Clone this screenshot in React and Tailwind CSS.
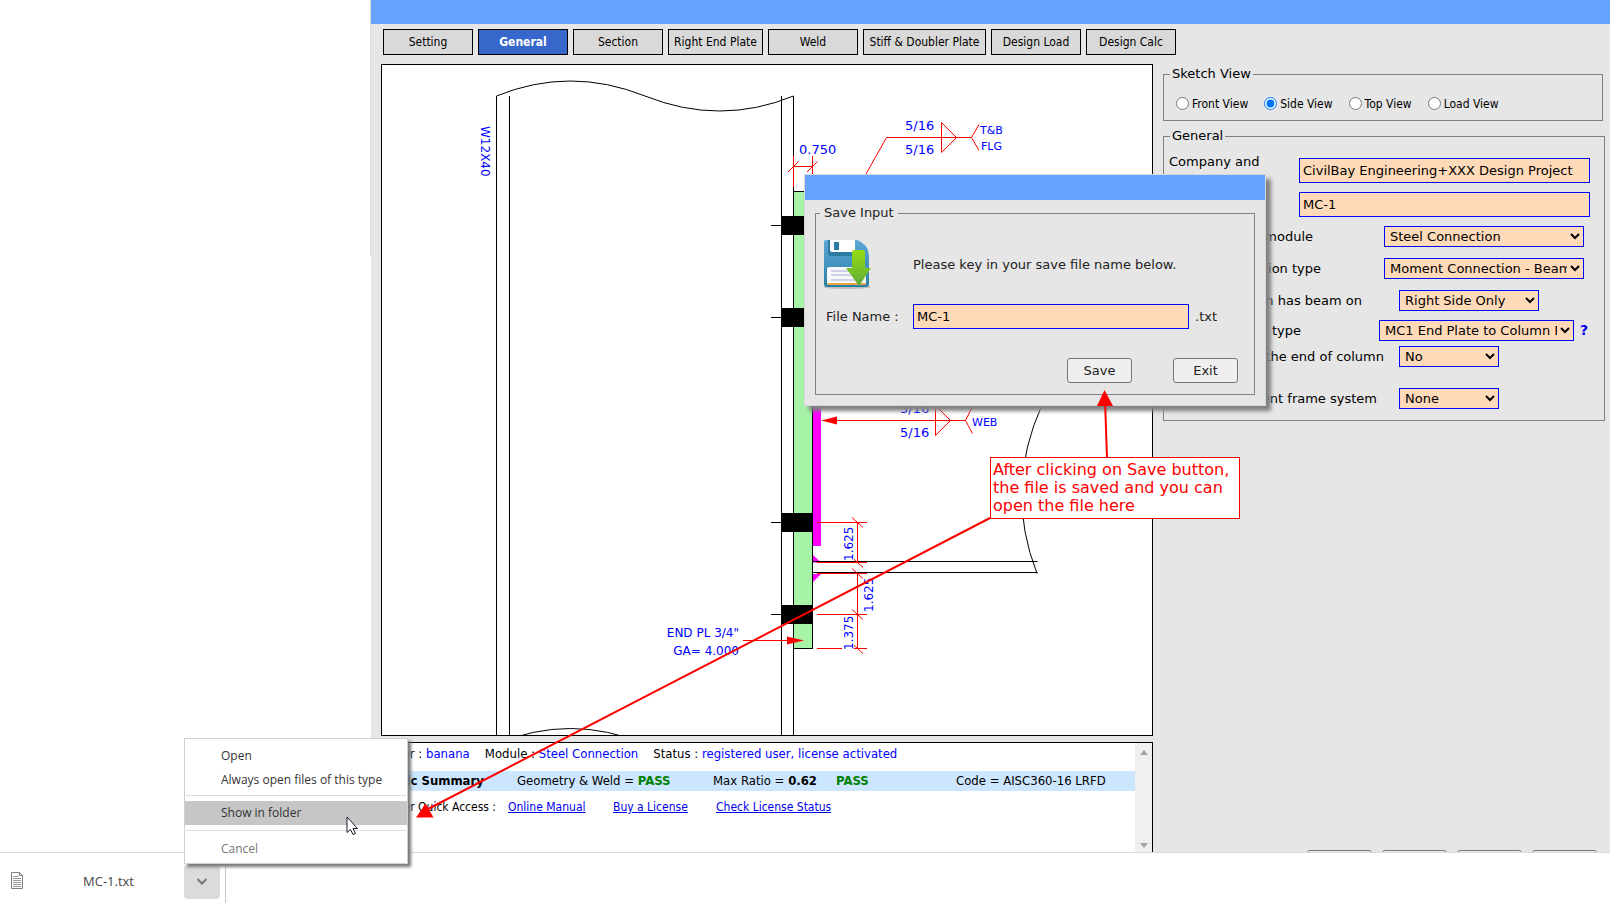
import React from 'react'

const tabs = [
  { name: 'Setting', width: 'w-[90px]' },
  { name: 'General', width: 'w-[90px]', active: true },
  { name: 'Section', width: 'w-[90px]' },
  { name: 'Right End Plate', width: 'w-[95px]' },
  { name: 'Weld', width: 'w-[90px]' },
  { name: 'Stiff & Doubler Plate', width: 'w-[123px]' },
  { name: 'Design Load', width: 'w-[90px]' },
  { name: 'Design Calc', width: 'w-[90px]' },
]

const views = ['Front View', 'Side View', 'Top View', 'Load View']

const tahoma = "font-['DejaVu_Sans_Condensed','DejaVu_Sans',sans-serif]"
const verdana = "font-['DejaVu_Sans',sans-serif]"
const segoe = "font-['Open_Sans',sans-serif]"

const field =
  'border border-[#0000ff] bg-[#ffdab9] text-[13px] text-black outline-none'

const Tabs = () => (
  <nav className="flex gap-[5px] pl-3 pt-[5px]">
    {tabs.map(t => (
      <button
        key={t.name}
        className={`h-[26px] border border-black text-center text-[12px] whitespace-nowrap ${tahoma} ${t.width} ${
          t.active ? 'bg-[#3867cb] font-bold text-white' : 'bg-[#d9d9d9]'
        }`}
      >
        {t.name}
      </button>
    ))}
  </nav>
)

const Bolt = ({ y }) => (
  <g>
    <path d={`M771 ${y}H782`} stroke="#000" />
    <rect x="781" y={y - 9.5} width="32" height="19" fill="#000" />
  </g>
)

const Tick = ({ y }) => <path d={`M817 ${y}H867M852 ${y - 5}L863 ${y + 5}`} />

const Sketch = () => (
  <svg viewBox="382 65 770 670" className="block w-full" fill="none">
    {/* column */}
    <g stroke="#000">
      <path d="M496.5 96V736M509.5 96V736M781.5 96V736M793.5 96V736" />
      <path d="M496.5 96Q570 66 645 96T793.5 96" />
      <path d="M496.5 744Q570 713 645 744" />
    </g>
    {/* end plate */}
    <rect x="793.5" y="191.5" width="19" height="457" fill="#a6f2a6" stroke="#000" />
    <rect x="813" y="300" width="8" height="246" fill="#f0f" />
    <path d="M813 555L821 562.5H813ZM813 574H821L813 582Z" fill="#f0f" />
    {[225.5, 317.5, 522.5, 614.5].map(y => (
      <Bolt key={y} y={y} />
    ))}
    {/* beam */}
    <path
      d="M813 561.5H1037.5M813 572.5H1037.5M1042 405Q1004 489 1037 573.5"
      stroke="#000"
    />
    {/* dimensions */}
    <g stroke="#f00">
      <path d="M793.5 156V187M812.5 156V187M793 166.5H813M788 172L798.5 161.5M807 172L817.5 161.5" />
      <path d="M866 174L886.5 137.5H971.5M979 124.5L971.5 137.5L979 150.5M941.5 122.5V152.5L956.5 137.5Z" />
      <path d="M832 420.5H965.5M972 407.5L965.5 420.5L972.5 433.5M935.5 405.5V435.5L950.5 420.5Z" />
      {[522.5, 562.5, 573.5, 614.5, 648.5].map(y => (
        <Tick key={y} y={y} />
      ))}
      <path d="M857.5 522V562M857.5 573V649M743 640.5H790" />
    </g>
    <path d="M821 420.5L837 416.5V424.5ZM804 640.5L787 636.5V644.5Z" fill="#f00" />
    <path d="M842 524H854V560H842ZM842 615H854V650H842Z" fill="#fff" />
    <g fill="#0000ff" className={`text-[13px] ${verdana}`}>
      <text x="799" y="154">0.750</text>
      <text x="905" y="130">5/16</text>
      <text x="905" y="154">5/16</text>
      <text x="900" y="413">5/16</text>
      <text x="900" y="437">5/16</text>
    </g>
    <g fill="#0000ff" className={`text-[12px] ${verdana}`}>
      <text transform="translate(853 561) rotate(-90)">1.625</text>
      <text transform="translate(873 612) rotate(-90)">1.625</text>
      <text transform="translate(853 650) rotate(-90)">1.375</text>
      <text transform="translate(481 126) rotate(90)">W12X40</text>
      <text x="739" y="637" textAnchor="end">END PL 3/4"</text>
      <text x="739" y="655" textAnchor="end">GA= 4.000</text>
    </g>
    <g fill="#0000ff" className={`text-[11px] ${verdana}`}>
      <text x="980" y="134">T&amp;B</text>
      <text x="981" y="150">FLG</text>
      <text x="972" y="426">WEB</text>
    </g>
  </svg>
)

const link = 'text-[12px] text-[#0000ee] underline'

const Info = () => (
  <section className={`mt-1.5 flex h-40 border border-black bg-white ${tahoma}`}>
    <div className="min-w-0 flex-1 text-[12px] whitespace-nowrap">
      <p className="flex h-[22px] items-center gap-[15px] pl-1.5 text-[13px]">
        <span>
          User : <span className="text-[#0000ff]">banana</span>
        </span>
        <span>
          Module : <span className="text-[#0000ff]">Steel Connection</span>
        </span>
        <span>
          Status :{' '}
          <span className="text-[#0000ff]">registered user, license activated</span>
        </span>
      </p>
      <p className="mt-1.5 grid h-5 grid-cols-[135px_196px_123px_120px_1fr] items-center bg-[#cce6ff] text-[13px]">
        <b className="pl-2">Calc Summary</b>
        <span>
          Geometry &amp; Weld = <b className="text-[#008000]">PASS</b>
        </span>
        <span>
          Max Ratio = <b>0.62</b>
        </span>
        <b className="text-[#008000]">PASS</b>
        <span>Code = AISC360-16 LRFD</span>
      </p>
      <p className="mt-[7px] grid h-4 grid-cols-[126px_105px_103px_1fr] items-center">
        <span className="pl-2">User Quick Access :</span>
        <a href="#manual" className={link}>Online Manual</a>
        <a href="#buy" className={link}>Buy a License</a>
        <a href="#status" className={link}>Check License Status</a>
      </p>
    </div>
    <div className="flex h-[112px] w-[17px] flex-col items-center justify-between bg-[#f0f0f0] py-[7px]">
      <svg width="8" height="5"><path d="M4 0L8 5H0Z" fill="#a3a3a3" /></svg>
      <svg width="8" height="5"><path d="M4 5L8 0H0Z" fill="#a3a3a3" /></svg>
    </div>
  </section>
)

const Row = ({ id, label, labelStyle, selectStyle, value, children }) => (
  <div className="flex h-[21px] items-center">
    <label htmlFor={id} className={`shrink-0 text-right whitespace-nowrap ${labelStyle}`}>
      {label}
    </label>
    <select id={id} className={`h-[21px] shrink-0 pl-px ${field} ${selectStyle}`}>
      <option>{value}</option>
    </select>
    {children}
  </div>
)

const Side = () => (
  <div className={`flex min-w-0 flex-1 flex-col pr-[5px] pl-2.5 text-[13px] ${verdana}`}>
    <fieldset className="mr-0.5 h-[56px] border border-[#808080] pl-3">
      <legend className="-ml-1.5 px-0.5 leading-[18px]">Sketch View</legend>
      <div className={`flex items-center gap-4 pt-3 text-[12px] ${tahoma}`}>
        {views.map(v => (
          <label key={v} className="flex items-center gap-[3px]">
            <input type="radio" name="view" defaultChecked={v === 'Side View'} className="mb-0.5 size-[13px]" />
            {v}
          </label>
        ))}
      </div>
    </fieldset>
    <fieldset className="mt-1.5 h-[294px] border border-[#808080] pl-[5px]">
      <legend className="ml-px px-0.5 leading-[18px]">General</legend>
      <div className="flex">
        <label htmlFor="company" className="w-[130px] pt-[7px] leading-5">
          Company and project name
        </label>
        <div className="mt-[13px] flex w-[291px] flex-col gap-[9px]">
          <input id="company" defaultValue="CivilBay Engineering+XXX Design Project" className={`h-[25px] px-[3px] ${field}`} />
          <input aria-label="Job name" defaultValue="MC-1" className={`h-[25px] px-[3px] ${field}`} />
        </div>
      </div>
      <div className="mt-[9px] flex flex-col gap-[11px]">
        <Row id="module" label="Design module" labelStyle="w-[215px] pr-[71px]" selectStyle="w-[200px]" value="Steel Connection" />
        <Row id="conn" label="Connection type" labelStyle="w-[215px] pr-[63px]" selectStyle="w-[200px]" value="Moment Connection - Beam to Column" />
        <Row id="beam" label="Column has beam on" labelStyle="w-[230px] pr-[37px]" selectStyle="w-[140px]" value="Right Side Only" />
      </div>
      <div className="mt-[9px] flex flex-col gap-[5px]">
        <Row id="mc" label="Connection type" labelStyle="w-[210px] pr-[78px]" selectStyle="w-[195px]" value="MC1 End Plate to Column Flange">
          <a href="#help" className="pl-1.5 text-[14px] font-bold text-[#0000ff]">?</a>
        </Row>
        <Row id="end" label="At the end of column" labelStyle="w-[230px] pr-[15px]" selectStyle="w-[100px]" value="No" />
      </div>
      <div className="mt-[21px]">
        <Row id="frame" label="Moment frame system" labelStyle="w-[230px] pr-[22px]" selectStyle="w-[100px]" value="None" />
      </div>
    </fieldset>
    <div className="mt-auto flex h-0.5 justify-end gap-2.5 pr-2">
      {['New', 'Open', 'Save', 'Exit'].map(n => (
        <button key={n} aria-label={n} className="h-6 w-[65px] shrink-0 rounded-[3px] border border-[#767676] bg-[#efefef]" />
      ))}
    </div>
  </div>
)

const DiskIcon = () => (
  <svg width="50" height="51" viewBox="0 0 50 51">
    <defs>
      <linearGradient id="disk" x1="0" y1="0" x2="0" y2="1">
        <stop offset="0" stopColor="#5fa8d6" />
        <stop offset="1" stopColor="#277fa6" />
      </linearGradient>
      <linearGradient id="arrow" x1="0" y1="0" x2="0" y2="1">
        <stop offset="0" stopColor="#95dc12" />
        <stop offset="1" stopColor="#5cab3a" />
      </linearGradient>
    </defs>
    <ellipse cx="25" cy="48" rx="24" ry="2" fill="#bdbdbd" />
    <path d="M4 1H35Q46 5 47 16V45Q47 48 44 48H5Q2 48 2 45V3Q2 1 4 1Z" fill="url(#disk)" />
    <path d="M6 1H33V14Q33 17 30 17H9Q6 17 6 14Z" fill="#2b7ba3" />
    <path d="M8 1H33V11Q33 13 31 13H10Q8 13 8 11Z" fill="#fff" />
    <rect x="12" y="3" width="5" height="8" fill="#2b7ba3" />
    <rect x="5" y="28" width="39" height="18" rx="2" fill="#f8f8fb" />
    <path d="M5 44H44V45Q44 46 42 46H7Q5 46 5 45Z" fill="#e6a446" />
    <path d="M9 32H41M9 36H41M9 41H41" stroke="#a4b0d4" />
    <path d="M30 13Q30 11 32 11H41Q43 11 43 13V29H49L37 47L24 29H30Z" fill="url(#arrow)" />
  </svg>
)

const dialogButton =
  'h-[25px] w-[65px] rounded-[3px] border border-[#767676] bg-[#efefef] text-[13px]'

const SaveDialog = () => (
  <div
    role="dialog"
    aria-label="Save Input"
    className={`absolute top-[174px] left-[804px] w-[462px] border border-[#d8d8d8] bg-[#e6e6e6] text-[13px] text-[#222] shadow-[5px_5px_4px_#808080] ${verdana}`}
  >
    <div className="h-[25px] bg-[#66a3ff]" />
    <fieldset className="mx-2.5 mt-1 mb-2.5 h-[191px] border border-[#808080] pl-1.5">
      <legend className="-ml-0.5 px-1 leading-[18px]">Save Input</legend>
      <div className="mt-[17px] flex items-center">
        <DiskIcon />
        <p className="pl-[41px]">Please key in your save file name below.</p>
      </div>
      <div className="mt-3.5 flex items-center">
        <label htmlFor="file" className="w-[91px] pl-1">File Name :</label>
        <input id="file" defaultValue="MC-1" className={`h-[25px] w-[276px] px-[3px] ${field}`} />
        <span className="pl-1.5">.txt</span>
      </div>
      <div className="mt-[29px] flex justify-end gap-[41px] pr-4">
        <button className={dialogButton}>Save</button>
        <button className={dialogButton}>Exit</button>
      </div>
    </fieldset>
  </div>
)

const Note = () => (
  <>
    <svg className="pointer-events-none absolute top-0 left-0" width="1250" height="850">
      <path d="M990 518L428 809M1107 458L1105 400" stroke="#f00" strokeWidth="2" />
      <path d="M416 817.5H433.5L425.5 803.5ZM1104.5 390L1113 406H1097Z" fill="#f00" />
    </svg>
    <p className={`absolute top-[457px] left-[990px] w-[250px] border border-[#ff0000] bg-white px-0.5 pt-[3px] pb-[3px] text-[16px] leading-[18px] whitespace-nowrap text-[#ff0000] ${verdana}`}>
      After clicking on Save button,
      <br />
      the file is saved and you can
      <br />
      open the file here
    </p>
  </>
)

const menuItem = 'block h-6 w-full pl-9 text-left'

const Menu = () => (
  <div className={`absolute bottom-11 left-[184px] w-[224px] border border-[#d0d0d0] bg-white pt-[5px] text-[12px] text-[#333] shadow-[3px_3px_3px_#777] ${segoe}`}>
    <button className={menuItem}>Open</button>
    <button className={menuItem}>Always open files of this type</button>
    <hr className="mx-px mt-[3px] mb-[5px] border-[#dadce0]" />
    <button className={`${menuItem} bg-[#c6c6c6]`}>Show in folder</button>
    <hr className="mx-px my-[5px] border-[#dadce0]" />
    <button className={`${menuItem} mt-1.5 mb-0.5 text-[#777]`}>Cancel</button>
    <svg className="absolute top-[77px] left-[161px]" width="13" height="20" viewBox="0 0 13 20">
      <path d="M1 1V16.5L4.5 13.5L7 18.5L9.5 17.5L7 12.5H11.5Z" fill="#fff" stroke="#1a1a2a" />
    </svg>
  </div>
)

const Downloads = () => (
  <footer className={`flex h-14 shrink-0 border-t border-[#dadce0] bg-white text-[13px] text-[#444] ${segoe}`}>
    <div className="my-[5px] flex h-[45px] w-[226px] items-center border-r border-[#c8c8c8] pr-[5px] pl-[11px]">
      <svg width="12" height="17" viewBox="0 0 12 17" fill="none" stroke="#808080">
        <path d="M.5 .5H8.5L11.5 3.5V16.5H.5ZM8.5 .5V3.5H11.5" />
        <path d="M2 4.5H7M2 6.5H10M2 8.5H10M2 10.5H10M2 12.5H10M2 14.5H10" stroke="#999" />
      </svg>
      <span className="flex-1 pt-0.5 pl-[60px]">MC-1.txt</span>
      <button aria-label="More" className="mt-0.5 flex h-[34px] w-9 items-center justify-center rounded bg-[#dadcdb]">
        <svg width="10" height="7" viewBox="0 0 10 7" fill="none" stroke="#777" strokeWidth="2">
          <path d="M.5 1L5 5.5L9.5 1" />
        </svg>
      </button>
    </div>
  </footer>
)

const App = () => (
  <div className="relative flex h-screen flex-col overflow-hidden bg-white text-black">
    <div className="flex min-h-0 flex-1">
      <aside className="w-[371px] shrink-0">
        <div className="h-64 border-r border-[#dcdcdc]" />
      </aside>
      <main className="flex min-w-0 flex-1 flex-col overflow-hidden bg-[#e6e6e6]">
        <header className="h-6 shrink-0 bg-[#66a3ff]" />
        <Tabs />
        <div className="flex min-h-0 flex-1 pl-2.5">
          <div className="w-[772px] shrink-0 pt-[9px]">
            <div className="border border-black bg-white">
              <Sketch />
            </div>
            <Info />
          </div>
          <div className="flex min-w-0 flex-1 pt-2.5">
            <Side />
          </div>
        </div>
      </main>
    </div>
    <Downloads />
    <SaveDialog />
    <Note />
    <Menu />
  </div>
)

export default App
